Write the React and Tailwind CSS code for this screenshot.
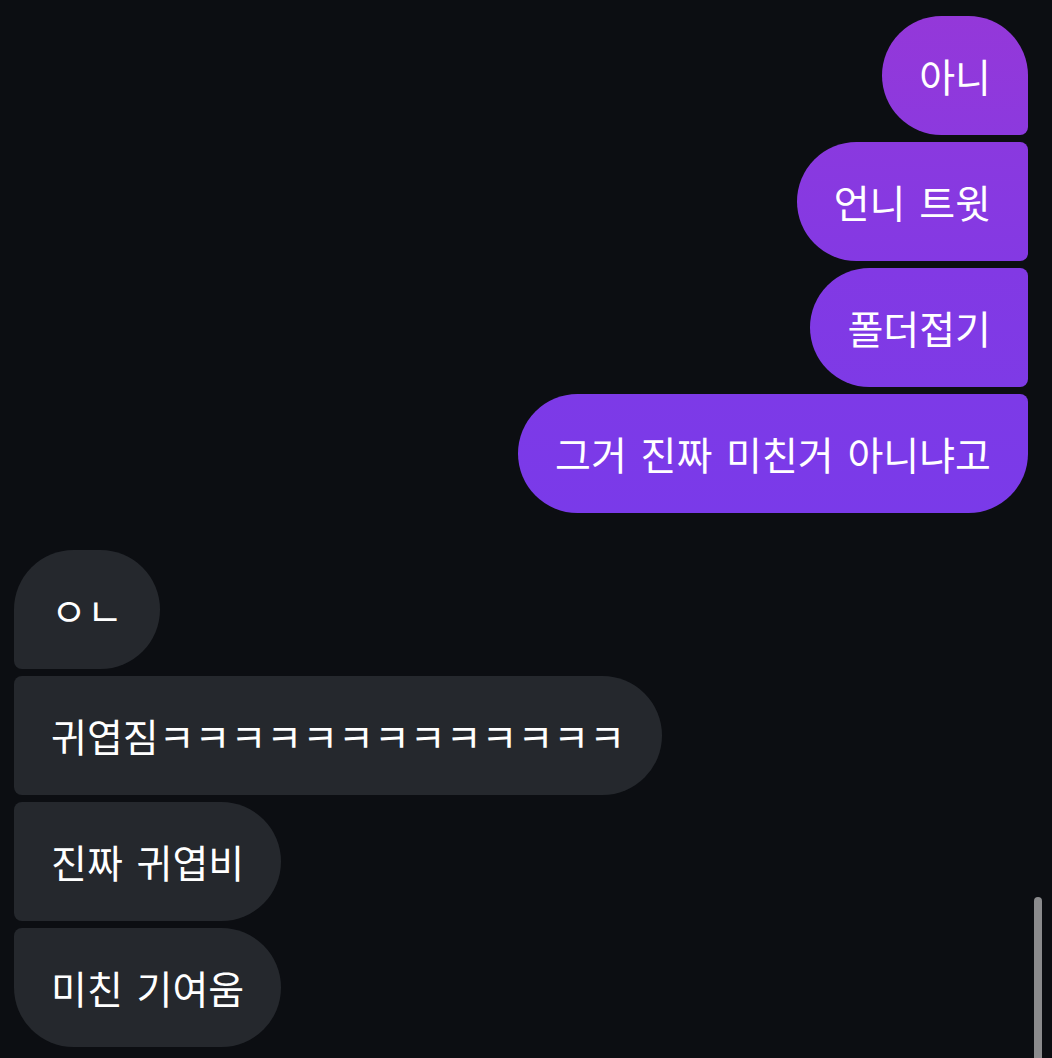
const sent = [
  { text: '아니', shape: 'rounded-l-[60px] rounded-tr-[60px] rounded-br-[8px]', bg: 'bg-gradient-to-b from-[#9438d9] to-[#8c39de]' },
  { text: '언니 트윗', shape: 'rounded-l-[60px] rounded-r-[8px]', bg: 'bg-gradient-to-b from-[#8a39df] to-[#8439e3]' },
  { text: '폴더접기', shape: 'rounded-l-[60px] rounded-r-[8px]', bg: 'bg-gradient-to-b from-[#8239e4] to-[#7e3ae6]' },
  { text: '그거 진짜 미친거 아니냐고', shape: 'rounded-l-[60px] rounded-tr-[8px] rounded-br-[60px]', bg: 'bg-gradient-to-b from-[#7d3ae7] to-[#7a3ae9]' },
];

const received = [
  { text: 'ㅇㄴ', shape: 'rounded-r-[60px] rounded-tl-[60px] rounded-bl-[8px]' },
  { text: '귀엽짐ㅋㅋㅋㅋㅋㅋㅋㅋㅋㅋㅋㅋㅋ', shape: 'rounded-r-[60px] rounded-l-[8px]' },
  { text: '진짜 귀엽비', shape: 'rounded-r-[60px] rounded-l-[8px]' },
  { text: '미친 기여움', shape: 'rounded-r-[60px] rounded-tl-[8px] rounded-bl-[60px]' },
];

function Bubble({ text, shape, bg }) {
  return (
    <div
      className={`h-[119px] flex items-center px-[37px] text-[39px] text-white whitespace-nowrap [word-spacing:5px] ${shape} ${bg}`}
    >
      {text}
    </div>
  );
}

export default function App() {
  return (
    <div
      className="relative w-[1052px] h-[1058px] overflow-hidden bg-[#0c0e12]"
      style={{ fontFamily: '"Noto Sans CJK KR", "Noto Sans", sans-serif' }}
    >
      <div className="flex flex-col pt-4 pl-[14px] pr-[24px]">
        {/* outgoing */}
        <div className="flex flex-col items-end gap-[7px]">
          {sent.map((m) => (
            <Bubble key={m.text} {...m} />
          ))}
        </div>

        {/* incoming */}
        <div className="flex flex-col items-start gap-[7px] mt-[37px]">
          {received.map((m) => (
            <Bubble key={m.text} {...m} bg="bg-[#25282d]" />
          ))}
        </div>
      </div>

      {/* scrollbar thumb */}
      <div className="absolute right-[10px] top-[897px] bottom-0 w-2 rounded-t-full bg-[#8b8b8d]" />
    </div>
  );
}
